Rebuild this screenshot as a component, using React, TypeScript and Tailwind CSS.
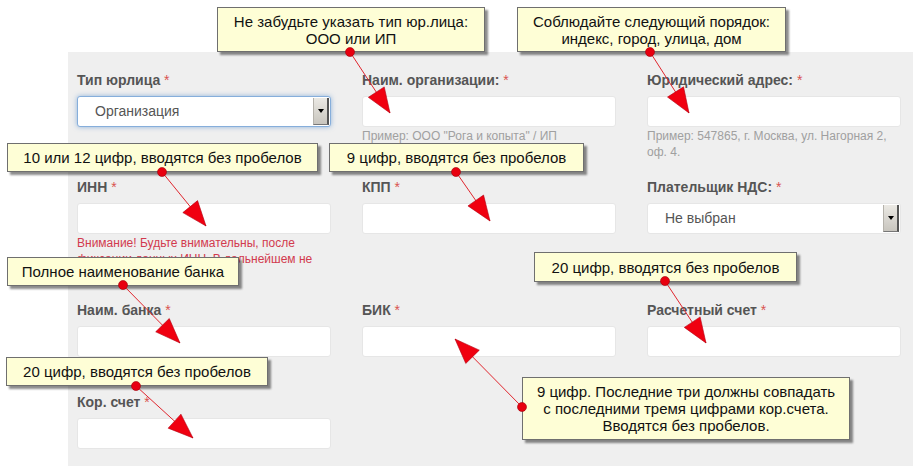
import React from "react";

type Arrow = { from: [number, number]; to: [number, number] };

const arrows: Arrow[] = [
  { from: [350, 52], to: [390, 113] },
  { from: [650, 52], to: [689, 113] },
  { from: [162, 172], to: [206, 226] },
  { from: [456, 172], to: [490, 221] },
  { from: [123, 285], to: [180, 343] },
  { from: [665, 281], to: [706, 343] },
  { from: [136, 386], to: [193, 438] },
  { from: [522, 407], to: [455, 339] },
];

function head(a: Arrow) {
  const [x1, y1] = a.from;
  const [x2, y2] = a.to;
  const dx = x2 - x1;
  const dy = y2 - y1;
  const len = Math.hypot(dx, dy);
  const ux = dx / len;
  const uy = dy / len;
  const bx = x2 - ux * 25;
  const by = y2 - uy * 25;
  const px = -uy * 9.5;
  const py = ux * 9.5;
  return `${x2},${y2} ${bx + px},${by + py} ${bx - px},${by - py}`;
}

function Label({ text }: { text: string }) {
  return (
    <div className="h-4 leading-4 text-[14px] font-bold text-[#555]">
      {text} <span className="text-[#d9534f] font-normal">*</span>
    </div>
  );
}

function Input() {
  return <div className="mt-2 h-[31px] rounded-[3px] bg-white border border-[#e6e6e6]" />;
}

function Select({ value, focused }: { value: string; focused?: boolean }) {
  return (
    <div
      className={
        focused
          ? "mt-2 h-[31px] flex rounded-[3px] bg-white border border-[#86aedb] shadow-[0_0_5px_rgba(82,140,205,0.6)]"
          : "mt-2 h-[31px] flex rounded-[3px] bg-white border border-[#e6e6e6]"
      }
    >
      <div className="flex-1 flex items-center pl-[17px] text-[14px] text-[#555]">{value}</div>
      <div className="w-[16px] my-[1px] mr-[1px] flex items-center justify-center bg-gradient-to-b from-[#ebe9e4] to-[#c8c5be] border-l border-[#b5b2ab] border-r-2 border-r-[#555] border-b border-b-[#777]">
        <div className="w-0 h-0 border-x-[3.5px] border-x-transparent border-t-[4px] border-t-black" />
      </div>
    </div>
  );
}

function Callout({ className, lines }: { className: string; lines: string[] }) {
  return (
    <div
      className={`absolute flex flex-col items-center justify-center bg-[#fefed6] border border-[#6f6f6f] shadow-[3px_3px_2px_rgba(0,0,0,0.45)] text-[15px] leading-[17px] text-[#111] ${className}`}
    >
      {lines.map((l) => (
        <div key={l}>{l}</div>
      ))}
    </div>
  );
}

export default function App() {
  return (
    <div className="relative w-[913px] h-[466px] overflow-hidden bg-white font-['Liberation_Sans',Arial,sans-serif]">
      <div className="pt-[52px] pl-[68px] h-full">
        <div className="h-full bg-[#efefef] pl-[9px] pt-[20px]">
          <div className="grid grid-cols-[254px_254px_254px] gap-x-[31px] grid-rows-[107px_123px_92px_auto]">
            <div>
              <Label text="Тип юрлица" />
              <Select value="Организация" focused />
            </div>
            <div>
              <Label text="Наим. организации:" />
              <Input />
              <div className="mt-[1px] leading-4 text-[12px] text-[#a0a0a0]">
                Пример: ООО "Рога и копыта" / ИП
              </div>
            </div>
            <div>
              <Label text="Юридический адрес:" />
              <Input />
              <div className="mt-[1px] leading-4 text-[12px] text-[#a0a0a0]">
                Пример: 547865, г. Москва, ул. Нагорная 2, оф. 4.
              </div>
            </div>

            <div>
              <Label text="ИНН" />
              <Input />
              <div className="mt-[1px] leading-4 text-[12px] text-[#d23a4e] w-[245px]">
                Внимание! Будьте внимательны, после фиксации данных ИНН. В дальнейшем не
              </div>
            </div>
            <div>
              <Label text="КПП" />
              <Input />
            </div>
            <div>
              <Label text="Плательщик НДС:" />
              <Select value="Не выбран" />
            </div>

            <div>
              <Label text="Наим. банка" />
              <Input />
            </div>
            <div>
              <Label text="БИК" />
              <Input />
            </div>
            <div>
              <Label text="Расчетный счет" />
              <Input />
            </div>

            <div>
              <Label text="Кор. счет" />
              <Input />
            </div>
          </div>
        </div>
      </div>

      <Callout
        className="left-[217px] top-[7px] w-[268px] h-[45px]"
        lines={["Не забудьте указать тип юр.лица:", "ООО или ИП"]}
      />
      <Callout
        className="left-[517px] top-[7px] w-[269px] h-[45px]"
        lines={["Соблюдайте следующий порядок:", "индекс, город, улица, дом"]}
      />
      <Callout
        className="left-[7px] top-[143px] w-[311px] h-[29px]"
        lines={["10 или 12 цифр, вводятся без пробелов"]}
      />
      <Callout
        className="left-[329px] top-[143px] w-[255px] h-[29px]"
        lines={["9 цифр, вводятся без пробелов"]}
      />
      <Callout
        className="left-[7px] top-[257px] w-[232px] h-[29px]"
        lines={["Полное наименование банка"]}
      />
      <Callout
        className="left-[534px] top-[252px] w-[263px] h-[30px]"
        lines={["20 цифр, вводятся без пробелов"]}
      />
      <Callout
        className="left-[6px] top-[357px] w-[262px] h-[29px]"
        lines={["20 цифр, вводятся без пробелов"]}
      />
      <Callout
        className="left-[522px] top-[377px] w-[328px] h-[63px]"
        lines={[
          "9 цифр. Последние три должны совпадать",
          "с последними тремя цифрами кор.счета.",
          "Вводятся без пробелов.",
        ]}
      />

      <svg className="absolute inset-0 pointer-events-none" width="913" height="466">
        {arrows.map((a, i) => (
          <g key={i}>
            <line
              x1={a.from[0]}
              y1={a.from[1]}
              x2={a.to[0]}
              y2={a.to[1]}
              stroke="#e0262e"
              strokeWidth="1"
            />
            <polygon points={head(a)} fill="#f00010" stroke="#b00010" strokeWidth="0.6" />
            <circle cx={a.from[0]} cy={a.from[1]} r="4.5" fill="#e8000f" stroke="#a0000a" strokeWidth="0.6" />
          </g>
        ))}
      </svg>
    </div>
  );
}
